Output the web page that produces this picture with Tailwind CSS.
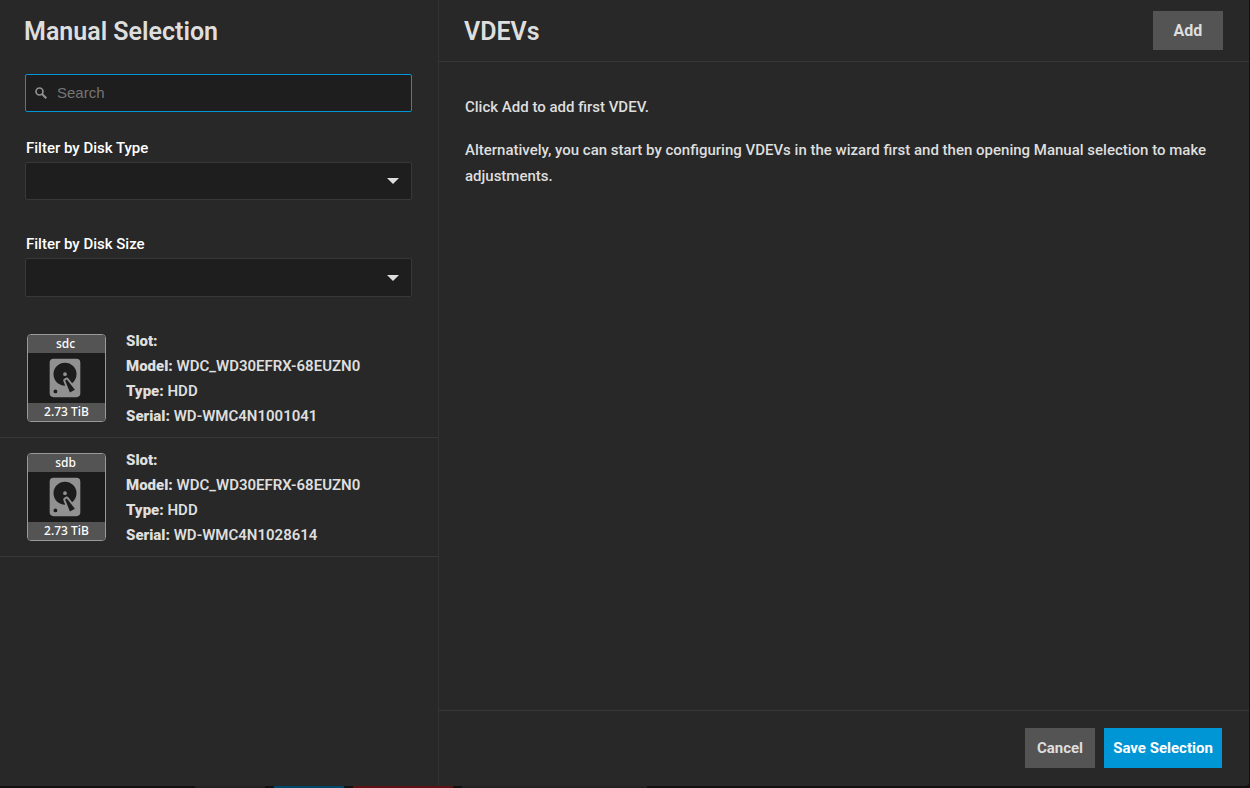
<!DOCTYPE html>
<html lang="en">
<head>
    <meta charset="UTF-8">
    <meta name="viewport" content="width=device-width, initial-scale=1.0">
    <title>Manual Selection</title>
    <script src="https://cdn.jsdelivr.net/npm/@tailwindcss/browser@4"></script>
</head>

<body class="bg-[#111111] font-['Roboto',sans-serif] text-[15px] text-[#dedede]">
    <svg class="hidden">
        <symbol id="hdd" viewBox="0 0 24 24">
            <path d="M6,2H18A2,2 0 0,1 20,4V20A2,2 0 0,1 18,22H6A2,2 0 0,1 4,20V4A2,2 0 0,1 6,2M12,4A6,6 0 0,0 6,10C6,13.31 8.69,16 12.1,16L11.22,13.77C10.95,13.29 11.11,12.68 11.59,12.4L12.45,11.9C12.93,11.63 13.54,11.79 13.82,12.27L15.74,14.69C17.12,13.59 18,11.9 18,10A6,6 0 0,0 12,4M12,9A1,1 0 0,1 13,10A1,1 0 0,1 12,11A1,1 0 0,1 11,10A1,1 0 0,1 12,9M7,18A1,1 0 0,0 6,19A1,1 0 0,0 7,20A1,1 0 0,0 8,19A1,1 0 0,0 7,18M12.09,13.27L14.58,19.58L17.17,18.08L12.95,12.77L12.09,13.27Z"/>
        </symbol>
    </svg>

    <div class="flex min-h-screen flex-col">
        <div class="mr-px flex flex-1 overflow-hidden rounded-br bg-[#282828]">
            <!-- Disks -->
            <aside class="w-[438px] shrink-0">
                <h2 class="px-6 pt-3 text-[25px] leading-10 font-semibold">Manual Selection</h2>

                <div class="pt-[22px] pr-[26px] pl-[25px]">
                    <label class="flex h-[38px] items-center rounded-xs border border-[#0095d5] bg-[#1e1e1e] pl-[9px]">
                        <svg class="size-3 shrink-0" viewBox="0 0 12 12" fill="none" stroke="#919191">
                            <circle cx="4.5" cy="4.5" r="3.5" stroke-width="1.7"/>
                            <path d="M7 7L11.3 11.3" stroke-width="2"/>
                        </svg>
                        <input type="text" placeholder="Search" aria-label="Search" class="ml-[10px] w-full bg-transparent font-['Liberation_Sans',sans-serif] outline-none placeholder:text-[#757575]">
                    </label>

                    <div class="pt-6">
                        <label for="disk-type" class="block pb-[2px] pl-px leading-6 font-medium text-white">Filter by Disk Type</label>
                        <div class="relative">
                            <select id="disk-type" class="h-[38px] w-full appearance-none rounded-xs border border-[#383838] bg-[#1e1e1e] px-3 outline-none"></select>
                            <svg class="pointer-events-none absolute top-4 right-[13px] h-[6px] w-3" viewBox="0 0 12 6" fill="#dedede"><path d="M0 0H12L6 6Z"/></svg>
                        </div>
                    </div>

                    <div class="pt-8">
                        <label for="disk-size" class="block pb-[2px] pl-px leading-6 font-medium text-white">Filter by Disk Size</label>
                        <div class="relative">
                            <select id="disk-size" class="h-[39px] w-full appearance-none rounded-xs border border-[#383838] bg-[#1e1e1e] px-3 outline-none"></select>
                            <svg class="pointer-events-none absolute top-[17px] right-[13px] h-[6px] w-3" viewBox="0 0 12 6" fill="#dedede"><path d="M0 0H12L6 6Z"/></svg>
                        </div>
                    </div>
                </div>

                <ul class="pt-[22px] font-semibold">
                    <li class="flex h-[119px] items-center gap-5 border-b border-[#383838] pl-[27px]">
                        <div class="flex h-[88px] w-[79px] shrink-0 flex-col overflow-hidden rounded border border-[#999999] bg-[#1c1c1c] text-center font-['Noto_Sans',sans-serif] text-[12px] leading-[18px] font-medium text-white">
                            <div class="bg-[#545454] pr-[2px]">sdc</div>
                            <div class="flex flex-1 items-center justify-center pr-1"><svg class="size-[46px]" fill="#919191"><use href="#hdd"/></svg></div>
                            <div class="bg-[#545454]">2.73 TiB</div>
                        </div>
                        <div class="pt-[2px] leading-[25px]">
                            <p><b>Slot:</b></p>
                            <p><b>Model:</b> WDC_WD30EFRX-68EUZN0</p>
                            <p><b>Type:</b> HDD</p>
                            <p><b>Serial:</b> WD-WMC4N1001041</p>
                        </div>
                    </li>
                    <li class="flex h-[119px] items-center gap-5 border-b border-[#383838] pl-[27px]">
                        <div class="flex h-[88px] w-[79px] shrink-0 flex-col overflow-hidden rounded border border-[#999999] bg-[#1c1c1c] text-center font-['Noto_Sans',sans-serif] text-[12px] leading-[18px] font-medium text-white">
                            <div class="bg-[#545454] pr-[2px]">sdb</div>
                            <div class="flex flex-1 items-center justify-center pr-1"><svg class="size-[46px]" fill="#919191"><use href="#hdd"/></svg></div>
                            <div class="bg-[#545454]">2.73 TiB</div>
                        </div>
                        <div class="pt-[2px] leading-[25px]">
                            <p><b>Slot:</b></p>
                            <p><b>Model:</b> WDC_WD30EFRX-68EUZN0</p>
                            <p><b>Type:</b> HDD</p>
                            <p><b>Serial:</b> WD-WMC4N1028614</p>
                        </div>
                    </li>
                </ul>
            </aside>

            <!-- VDEVs -->
            <main class="flex flex-1 flex-col border-l border-[#333333]">
                <header class="flex h-[62px] items-center justify-between border-b border-[#383838] pr-[26px] pl-[25px]">
                    <h2 class="pt-[2px] text-[25px] leading-10 font-semibold">VDEVs</h2>
                    <button type="button" class="h-[39px] w-[70px] bg-[#545454] text-[16px] font-bold">Add</button>
                </header>
                <div class="flex-1 space-y-[17px] px-[26px] pt-8 leading-[26px] font-medium">
                    <p>Click Add to add first VDEV.</p>
                    <p>Alternatively, you can start by configuring VDEVs in the wizard first and then opening Manual selection to make adjustments.</p>
                </div>
                <footer class="flex h-[76px] items-start justify-end gap-[9px] border-t border-[#383838] pt-[17px] pr-[27px]">
                    <button type="button" class="h-10 w-[70px] bg-[#545454] font-bold">Cancel</button>
                    <button type="button" class="h-10 w-[118px] bg-[#0095d5] font-bold text-white">Save Selection</button>
                </footer>
            </main>
        </div>

        <!-- Page behind the dialog -->
        <div class="flex h-[2px] gap-[9px] pl-[195px]">
            <div class="w-[70px] bg-[#222222]"></div>
            <div class="w-[70px] bg-[#00486a]"></div>
            <div class="w-[100px] bg-[#5f1216]"></div>
            <div class="w-[185px] bg-[#222222]"></div>
        </div>
    </div>
</body>
</html>
